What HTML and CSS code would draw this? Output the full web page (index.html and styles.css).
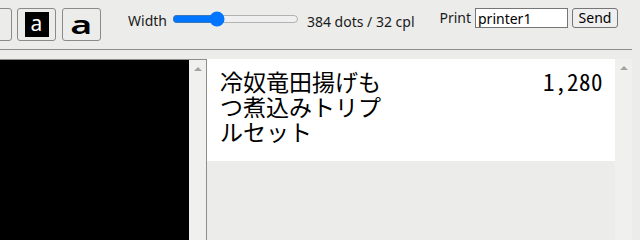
FILE: index.html
```html
<!DOCTYPE html>
<html lang="ja">
<head>
    <meta charset="UTF-8">
    <meta name="viewport" content="width=device-width, initial-scale=1.0">
    <title>Receipt Preview</title>
    <link rel="stylesheet" href="styles.css">
</head>
<body>
    <div id="app">
        <div id="toolbar">
            <button class="fontbtn first"></button>
            <button class="fontbtn"><span class="invert">a</span></button>
            <button class="fontbtn"><span class="wide">a</span></button>

            <label class="tool widthlabel" for="paperwidth">Width</label>
            <input type="range" id="paperwidth" min="0" max="1152" value="384">
            <span class="tool dots">384 dots / 32 cpl</span>

            <label class="tool printlabel" for="printer">Print</label>
            <input type="text" id="printer" value="printer1">
            <button id="send">Send</button>
        </div>

        <div id="main">
            <div id="preview" class="panel">
                <div id="paper"></div>
                <div class="vscroll"><span class="arrowup"></span></div>
            </div>
            <div id="editor" class="panel">
                <div class="content">
                    <div class="item">
                        <div class="name">冷奴竜田揚げもつ煮込みトリプルセット</div>
                        <div class="price">1,280</div>
                    </div>
                </div>
                <div class="vscroll"><span class="arrowup"></span></div>
            </div>
        </div>
    </div>
</body>
</html>
```

FILE: styles.css
```css
html{
    margin: 0;
    height: 100%;
    overflow: hidden;
}

body{
    margin: 0;
    height: 100%;
    overflow: hidden;
    background-color: #ecedea;
    font-family: "Noto Sans", "Noto Sans CJK JP", sans-serif;
    color: #1a1a1a;
}

#app{
    width: 632px;
    height: 100%;
    display: flex;
    flex-direction: column;
}

#toolbar{
    display: flex;
    align-items: flex-start;
    flex: none;
    height: 49px;
    border-bottom: 1px solid #8e8e8e;
}

.fontbtn{
    width: 39px;
    height: 33px;
    margin-top: 8px;
    margin-left: 5px;
    padding: 0;
    border: 1px solid #8a8a8a;
    border-radius: 3px;
    background-color: #ecedea;
    display: flex;
    align-items: center;
    justify-content: center;
    font-family: "Noto Sans", sans-serif;
}

.fontbtn.first{
    margin-left: -27px;
}

.fontbtn + .fontbtn + .fontbtn{
    margin-left: 6px;
}

.invert{
    width: 24px;
    height: 25px;
    background-color: black;
    color: white;
    font-size: 21px;
    line-height: 23px;
    text-align: center;
}

.wide{
    display: inline-block;
    font-size: 25px;
    font-weight: 600;
    line-height: 25px;
    color: black;
    transform: scaleX(1.5);
}

.tool{
    font-size: 14px;
}

.widthlabel{
    margin-left: 27px;
    margin-top: 11px;
}

#paperwidth{
    width: 127px;
    margin: 11px 0 0 5px;
}

.dots{
    margin-left: 8px;
    margin-top: 12px;
}

.printlabel{
    margin-left: auto;
    margin-top: 8px;
}

#printer{
    width: 93px;
    height: 20px;
    box-sizing: border-box;
    margin: 8px 0 0 4px;
    padding: 1px 2px;
    border: 1px solid #767676;
    font-family: "Noto Sans", sans-serif;
    font-size: 14px;
    background-color: white;
}

#send{
    width: 46px;
    height: 20px;
    margin: 8px 14px 0 4px;
    padding: 0;
    font-family: "Noto Sans", sans-serif;
    font-size: 14px;
    line-height: 16px;
    border: 1px solid #767676;
    border-radius: 3px;
    background-color: #efefef;
}

#main{
    display: flex;
    flex: 1;
    margin-top: 9px;
    min-height: 0;
}

.panel{
    display: flex;
    height: 100%;
    overflow: hidden;
}

#preview{
    width: 206px;
    border-top: 1px solid #8e8e8e;
    border-right: 1px solid #8e8e8e;
}

#paper{
    flex: 1;
    background-color: black;
}

#editor{
    flex: 1;
}

.content{
    flex: 1;
}

.vscroll{
    width: 17px;
    flex: none;
    background-color: #f0f0ee;
    display: flex;
    justify-content: center;
}

.arrowup{
    width: 0;
    height: 0;
    margin-top: 7px;
    border-left: 4px solid transparent;
    border-right: 4px solid transparent;
    border-bottom: 4px solid #a3a3a3;
}

.item{
    display: flex;
    justify-content: space-between;
    align-items: flex-start;
    padding: 10px 12px 17px 13px;
    background-color: white;
    font-family: "Noto Sans CJK JP", sans-serif;
    font-size: 23px;
    line-height: 25px;
    color: black;
}

.name{
    width: 170px;
}

.price{
    font-feature-settings: "hwid" 1;
    letter-spacing: 0.5px;
}
```
